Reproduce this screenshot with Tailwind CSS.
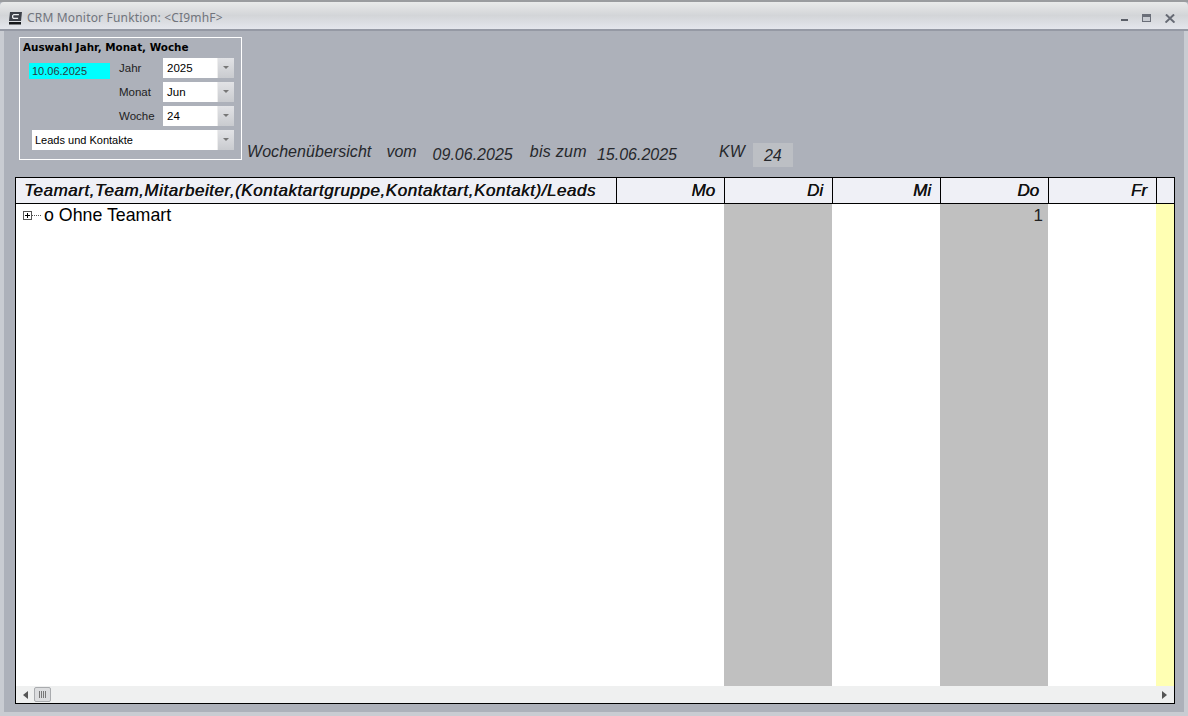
<!DOCTYPE html>
<html lang="de">
<head>
<meta charset="utf-8"/>
<title>CRM Monitor Funktion</title>
<script src="https://cdn.jsdelivr.net/npm/@tailwindcss/browser@4"></script>
</head>
<body class="w-[1188px] h-[716px] overflow-hidden bg-[#adb1ba] font-['Liberation_Sans',sans-serif] text-black">
<div class="h-[716px] flex flex-col border-t-2 border-[#9a9c9f]">
  <!-- Titelleiste -->
  <div class="h-[29px] shrink-0 flex items-center pt-[5px] pl-[8px] pr-[13px] bg-gradient-to-b from-[#e9eaea] via-[#d3d5d8] to-[#e4e6ec] border-b-2 border-[#9599a4] rounded-t-[4px]">
    <svg class="w-[14px] h-[14px] shrink-0" viewBox="0 0 14 14">
      <path d="M2 1h12l-1 9H1z" fill="#3c4048"/>
      <path d="M11 3H5.500L4 4.500v2L5 8h5l.2-1.200H5.700L5.300 6.200V4.800l.5-.6H10.800z" fill="#eef0f2"/>
      <path d="M1 11h12v2.500H1z" fill="#15171a"/>
    </svg>
    <span class="ml-[5px] text-[12px] tracking-[.18px] text-[#70747c] font-['Noto_Sans',sans-serif]">CRM Monitor Funktion: &lt;CI9mhF&gt;</span>
    <div class="ml-auto flex items-center gap-[14px]">
      <span class="block w-[7px] h-[2px] mt-[4px] bg-[#5b5f68]"></span>
      <span class="block w-[9px] h-[8px] border border-[#6a6e78] border-t-[3px] bg-[#c8cbd1]"></span>
      <svg class="w-[10px] h-[9px]" viewBox="0 0 11 10"><path d="M1 .5l9.500 9M10 .5L.500 9.500" stroke="#666a74" stroke-width="2.200"/></svg>
    </div>
  </div>
  <!-- Inhalt -->
  <div class="flex-1 min-h-0 flex flex-col pl-[15px] pr-[9px] pb-[8px] border-l-4 border-r-4 border-b-4 border-[#c9ccd2]">
    <div class="h-[146px] shrink-0 flex items-start">
      <div class="mt-[6px] w-[223px] h-[123px] shrink-0 border border-white px-[3px] pt-[2px]">
        <div class="text-[10.400px] leading-[14px] font-bold font-['DejaVu_Sans',sans-serif] whitespace-nowrap">Auswahl Jahr, Monat, Woche</div>
        <div class="flex mt-[4px]">
          <div class="w-[81px] h-[16px] ml-[6px] mt-[5px] bg-[#00ffff] text-[11px] leading-[16px] pl-[3px] text-[#2a3a40] shrink-0">10.06.2025</div>
          <div class="ml-[9px] flex flex-col gap-[4px]">
            <div class="flex items-center h-[20px]"><span class="w-[44px] pt-[2px] text-[11.500px] text-[#222]">Jahr</span>
              <div class="w-[71px] h-[20px] flex bg-white"><span class="flex-1 pl-[4px] text-[11.500px] leading-[20px]">2025</span><span class="w-[17px] bg-gradient-to-b from-[#e2e3e6] to-[#c9cbcf] border-l border-[#eee] flex justify-center pt-[8px]"><span class="w-0 h-0 border-x-[3px] border-x-transparent border-t-[3px] border-t-[#777]"></span></span></div>
            </div>
            <div class="flex items-center h-[20px]"><span class="w-[44px] pt-[2px] text-[11.500px] text-[#222]">Monat</span>
              <div class="w-[71px] h-[20px] flex bg-white"><span class="flex-1 pl-[4px] text-[11.500px] leading-[20px]">Jun</span><span class="w-[17px] bg-gradient-to-b from-[#e2e3e6] to-[#c9cbcf] border-l border-[#eee] flex justify-center pt-[8px]"><span class="w-0 h-0 border-x-[3px] border-x-transparent border-t-[3px] border-t-[#777]"></span></span></div>
            </div>
            <div class="flex items-center h-[20px]"><span class="w-[44px] pt-[2px] text-[11.500px] text-[#222]">Woche</span>
              <div class="w-[71px] h-[20px] flex bg-white"><span class="flex-1 pl-[4px] text-[11.500px] leading-[20px]">24</span><span class="w-[17px] bg-gradient-to-b from-[#e2e3e6] to-[#c9cbcf] border-l border-[#eee] flex justify-center pt-[8px]"><span class="w-0 h-0 border-x-[3px] border-x-transparent border-t-[3px] border-t-[#777]"></span></span></div>
            </div>
          </div>
        </div>
        <div class="w-[202px] h-[20px] ml-[9px] mt-[4px] flex bg-white"><span class="flex-1 pl-[3px] text-[11px] leading-[20px] whitespace-nowrap">Leads und Kontakte</span><span class="w-[17px] bg-gradient-to-b from-[#e2e3e6] to-[#c9cbcf] border-l border-[#eee] flex justify-center pt-[8px]"><span class="w-0 h-0 border-x-[3px] border-x-transparent border-t-[3px] border-t-[#777]"></span></span></div>
      </div>
      <div class="flex items-start mt-[111px] ml-[5px] italic text-[16px] leading-[20px] text-[#26282c] whitespace-nowrap">
        <span class="tracking-[.05px]">Wochenübersicht</span>
        <span class="ml-[15px]">vom</span>
        <span class="ml-[16px] mt-[3px]">09.06.2025</span>
        <span class="ml-[17px] tracking-[.3px]">bis zum</span>
        <span class="ml-[10px] mt-[3px]">15.06.2025</span>
        <span class="ml-[42px]">KW</span>
        <span class="ml-[8px] mt-[1px] w-[40px] h-[24px] bg-[#bcbfc4] text-center leading-[25px]">24</span>
      </div>
    </div>
    <!-- Tabelle -->
    <div class="flex-1 min-h-0 -ml-[4px] flex flex-col border border-black bg-white">
      <div class="h-[26px] shrink-0 flex bg-[#eff0f6] border-b border-black italic text-[17px] leading-[25px] text-[#111] whitespace-nowrap [text-shadow:0.4px_0_0_#111]">
        <div class="w-[601px] pl-[8px] tracking-[.55px] border-r border-black overflow-hidden">Teamart,Team,Mitarbeiter,(Kontaktartgruppe,Kontaktart,Kontakt)/Leads</div>
        <div class="w-[108px] pr-[9px] text-right border-r border-black">Mo</div>
        <div class="w-[108px] pr-[9px] text-right border-r border-black">Di</div>
        <div class="w-[108px] pr-[9px] text-right border-r border-black">Mi</div>
        <div class="w-[108px] pr-[9px] text-right border-r border-black">Do</div>
        <div class="w-[108px] pr-[9px] text-right border-r border-black">Fr</div>
        <div class="flex-1"></div>
      </div>
      <div class="flex-1 min-h-0 flex">
        <div class="w-[600px] flex items-start pl-[7px] pt-[2px] text-[17.800px] leading-[19px] whitespace-nowrap">
          <span class="mt-[5px] w-[9px] h-[9px] border border-[#555] flex items-center justify-center relative"><span class="absolute w-[5px] h-px bg-black"></span><span class="absolute w-px h-[5px] bg-black"></span></span>
          <span class="mt-[9px] w-[9px] border-t border-dotted border-[#555]"></span>
          <span class="ml-[3px]">o Ohne Teamart</span>
        </div>
        <div class="w-[108px]"></div>
        <div class="w-[108px] bg-[#c0c0c0]"></div>
        <div class="w-[108px]"></div>
        <div class="w-[108px] bg-[#c0c0c0] text-right pr-[5px] pt-[2px] text-[17px] leading-[19px] text-[#222]">1</div>
        <div class="w-[108px]"></div>
        <div class="flex-1 bg-[#ffffb3]"></div>
      </div>
      <!-- Scrollbar -->
      <div class="h-[17px] shrink-0 flex items-center bg-[#eff0f0] pl-[7px] pr-[7px]">
        <span class="w-0 h-0 border-y-[4px] border-y-transparent border-r-[5px] border-r-[#555]"></span>
        <span class="ml-[6px] w-[17px] h-[15px] rounded-[2px] border border-[#a9abae] bg-[#dcdddf] flex items-center justify-center gap-px">
          <span class="w-px h-[7px] bg-[#777]"></span><span class="w-px h-[7px] bg-[#777]"></span><span class="w-px h-[7px] bg-[#777]"></span><span class="w-px h-[7px] bg-[#777]"></span>
        </span>
        <span class="ml-auto w-0 h-0 border-y-[4px] border-y-transparent border-l-[5px] border-l-[#555]"></span>
      </div>
    </div>
  </div>
</div>
</body>
</html>
